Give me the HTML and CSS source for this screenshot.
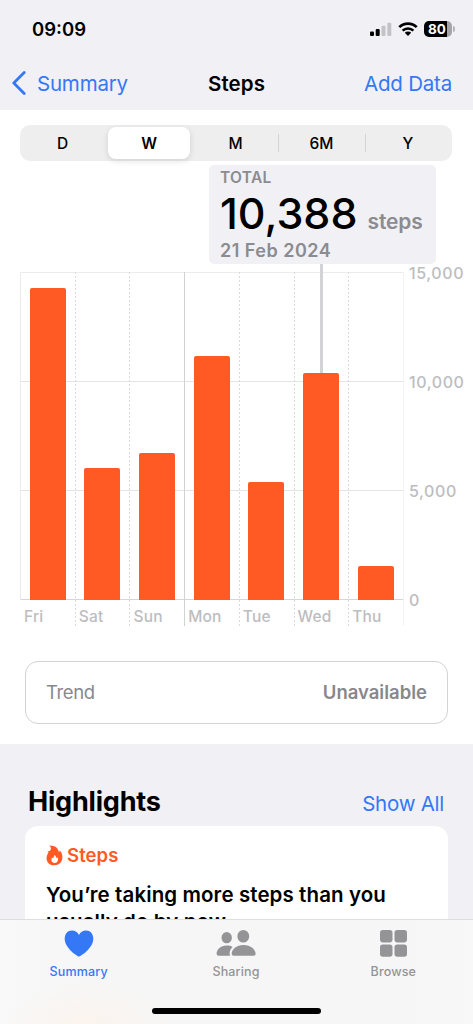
FILE: index.html
```html
<!DOCTYPE html>
<html lang="en">
<head>
  <meta charset="UTF-8"/>
  <meta name="viewport" content="width=device-width, initial-scale=1.0"/>
  <title>Steps</title>
  <link rel="stylesheet" href="styles.css">
</head>
<body>
  <div class="screen">
    <header class="header">
      <div class="status-bar">
        <span class="time">09:09</span>
        <div class="status-icons">
          <svg class="signal" viewBox="0 0 22 14" width="22" height="14">
            <rect x="0.5" y="9.5" width="4" height="4.5" rx="1.1"/>
            <rect x="6.2" y="7" width="4" height="7" rx="1.1"/>
            <rect class="off" x="12" y="3.8" width="4" height="10.2" rx="1.1"/>
            <rect class="off" x="17.8" y="0.8" width="4" height="13.2" rx="1.1"/>
          </svg>
          <svg class="wifi" viewBox="0 0 20 14" width="20" height="14">
            <path d="M1.3 5.1 A12.4 12.4 0 0 1 18.7 5.1" fill="none" stroke="#000" stroke-width="2.7"/>
            <path d="M4.6 8.6 A7.7 7.7 0 0 1 15.4 8.6" fill="none" stroke="#000" stroke-width="2.5"/>
            <path d="M10 14 L6.8 10.8 A4.6 4.6 0 0 1 13.2 10.8 Z"/>
          </svg>
          <div class="battery"><span class="battery-level">80</span></div>
        </div>
      </div>
      <nav class="nav-bar">
        <a class="nav-back">
          <svg viewBox="0 0 14 24" width="14" height="24">
            <path d="M12.2 1.6 L1.8 12 L12.2 22.4" fill="none" stroke="#3478f6" stroke-width="2.8" stroke-linecap="round" stroke-linejoin="round"/>
          </svg>
          <span>Summary</span>
        </a>
        <h1>Steps</h1>
        <a class="nav-action">Add Data</a>
      </nav>
    </header>

    <main class="content">
      <div class="segments">
        <button class="segment">D</button>
        <button class="segment active">W</button>
        <button class="segment">M</button>
        <button class="segment divided">6M</button>
        <button class="segment divided">Y</button>
      </div>

      <div class="chart">
        <div class="plot">
          <div class="day first"><div class="bar-area"><div class="bar" style="height: 95.2%"></div></div><span>Fri</span></div>
          <div class="day"><div class="bar-area"><div class="bar" style="height: 40.2%"></div></div><span>Sat</span></div>
          <div class="day"><div class="bar-area"><div class="bar" style="height: 44.8%"></div></div><span>Sun</span></div>
          <div class="day week-start"><div class="bar-area"><div class="bar" style="height: 74.5%"></div></div><span>Mon</span></div>
          <div class="day"><div class="bar-area"><div class="bar" style="height: 35.9%"></div></div><span>Tue</span></div>
          <div class="day"><div class="bar-area"><div class="bar" style="height: 69.2%"></div></div><span>Wed</span></div>
          <div class="day"><div class="bar-area"><div class="bar" style="height: 10.4%"></div></div><span>Thu</span></div>
        </div>
        <div class="y-axis">
          <span>15,000</span>
          <span>10,000</span>
          <span>5,000</span>
          <span>0</span>
        </div>
        <!-- Callout for the selected day -->
        <div class="marker"></div>
        <div class="callout">
          <div class="callout-label">TOTAL</div>
          <div class="callout-value"><strong>10,388</strong><span>steps</span></div>
          <div class="callout-date">21 Feb 2024</div>
        </div>
      </div>

      <div class="trend">
        <span class="trend-name">Trend</span>
        <span class="trend-value">Unavailable</span>
      </div>
    </main>

    <section class="highlights">
      <div class="highlights-head">
        <h2>Highlights</h2>
        <a class="show-all">Show All</a>
      </div>
      <div class="card">
        <div class="card-title">
          <svg viewBox="0 0 17 21" width="17" height="21">
            <path fill="#ff5a24" d="M3.2 0.6 C9 0.4 12.2 3.2 12.9 7.2 C13.4 6.8 13.7 6.1 13.8 5.2 C15.6 7.3 16.6 9.8 16.4 12.6 C16.2 17.4 13 20.3 8.4 20.3 C3.8 20.3 0.7 17.6 0.6 13.4 C0.5 11 1.4 9.3 2.5 7.5 L1.4 6.6 C2.9 6.3 4.3 5.7 4.8 4.5 C5.2 3.2 4.5 1.6 3.2 0.6 Z"/>
            <path fill="#fff" d="M8.2 9.9 C9.8 10.6 10.4 11.8 10.2 13.2 C10.7 13 11.1 12.5 11.2 12 C11.9 13 12.1 13.9 11.9 15 C11.6 16.9 10.4 17.9 8.7 17.9 C6.7 17.9 5.4 16.8 5.4 15 C5.4 14 5.7 13.3 6.2 12.6 C6.4 13.1 6.7 13.4 7.1 13.5 C7.1 12.2 8.7 11.3 8.2 9.9 Z"/>
          </svg>
          <span>Steps</span>
        </div>
        <p class="card-text">You’re taking more steps than you<br>usually do by now.</p>
      </div>
    </section>

    <footer class="tab-bar">
      <div class="tabs">
        <a class="tab active">
          <svg viewBox="0 0 30 27" width="30" height="27">
            <path d="M15 26.6 C13.7 26.6 0.7 18.3 0.7 8.8 C0.7 4.1 3.7 0.6 7.9 0.6 C11.2 0.6 13.6 2.2 15 4.9 C16.4 2.2 18.8 0.6 22.1 0.6 C26.3 0.6 29.3 4.1 29.3 8.8 C29.3 18.3 16.3 26.6 15 26.6 Z"/>
          </svg>
          <span>Summary</span>
        </a>
        <a class="tab">
          <svg viewBox="0 0 40 27" width="40" height="27">
            <ellipse cx="10.7" cy="7.7" rx="5.2" ry="5.6"/>
            <path d="M0.6 23.9 C0.6 19.6 4.7 15.6 10.6 15.6 C13.1 15.6 15 16.1 16.6 17 C14.6 18.9 13.6 21 13.6 23.7 Q13.6 24.9 14.3 25.7 H2.7 Q0.6 25.7 0.6 23.9 Z"/>
            <ellipse cx="27.3" cy="6.3" rx="5.9" ry="6.3"/>
            <path d="M15.6 23.9 C15.6 19.5 20.3 14.9 27.5 14.9 C34.8 14.9 39.6 19.5 39.6 23.9 Q39.6 25.7 37.4 25.7 H17.8 Q15.6 25.7 15.6 23.9 Z"/>
          </svg>
          <span>Sharing</span>
        </a>
        <a class="tab">
          <svg viewBox="0 0 27 27" width="27" height="27">
            <rect x="0" y="0" width="12.5" height="12.4" rx="2.8"/>
            <rect x="14.5" y="0" width="12.5" height="12.4" rx="2.8"/>
            <rect x="0" y="14.4" width="12.5" height="12.4" rx="2.8"/>
            <rect x="14.5" y="14.4" width="12.5" height="12.4" rx="2.8"/>
          </svg>
          <span>Browse</span>
        </a>
      </div>
      <div class="home-indicator"></div>
    </footer>
  </div>
</body>
</html>
```
FILE: styles.css
```css
:root {
  --bg-color: #f0f0f5;
  --blue: #3478f6;
  --orange: #ff5a24;
  --gray: #8b8b90;
  --light-gray: #bdbdbf;
  --line: #e4e4e6;
}

*, *::before, *::after { box-sizing: border-box; }

body {
  margin: 0;
  font-family: 'Inter', sans-serif;
  background: var(--bg-color);
  color: #000;
}

h1, h2, p { margin: 0; }

.screen {
  position: relative;
  display: flex;
  flex-direction: column;
  width: 473px;
  height: 1024px;
  overflow: hidden;
}

.header {
  height: 110px;
  flex: none;
  background: var(--bg-color);
}

.status-bar {
  display: flex;
  align-items: center;
  justify-content: space-between;
  height: 58px;
  padding: 0 18px 0 32px;
}

.time {
  font-size: 18.5px;
  font-weight: 600;
}

.status-icons {
  display: flex;
  align-items: center;
  gap: 6px;
}

.signal {
  width: 23px;
}

.signal .off { fill: #c3c3c7; }

.battery {
  position: relative;
  width: 28px;
  height: 16px;
  margin-right: 3px;
  border-radius: 5px;
  background: linear-gradient(90deg, #000 82%, #a5a5a9 82%);
}

.battery::after {
  content: "";
  position: absolute;
  left: 29px;
  top: 5px;
  width: 2px;
  height: 6px;
  border-radius: 0 2px 2px 0;
  background: #b5b5b9;
}

.battery-level {
  display: block;
  padding-right: 2px;
  color: #fff;
  font-size: 13.5px;
  font-weight: 700;
  line-height: 16px;
  text-align: center;
}

.nav-bar {
  display: grid;
  grid-template-columns: 1fr auto 1fr;
  align-items: center;
  height: 50px;
  padding: 0 21px 0 12px;
  color: var(--blue);
  font-size: 20.5px;
  letter-spacing: -0.2px;
}

.nav-back {
  display: flex;
  align-items: center;
  gap: 11px;
}

.nav-action {
  text-align: right;
}

.nav-bar h1 {
  padding-left: 9px;
  color: #000;
  font-size: 20.5px;
  font-weight: 600;
  letter-spacing: 0.1px;
}

.content {
  flex: none;
  height: 634px;
  padding: 15px 20px 0;
  background: #fff;
}

.segments {
  display: grid;
  grid-template-columns: repeat(5, 1fr);
  width: 432px;
  height: 36px;
  padding: 2px 0;
  border-radius: 10px;
  background: #eeeeef;
}

.segment {
  margin: 0 3px 0 2px;
  padding: 0;
  border: none;
  border-radius: 8px;
  background: none;
  color: #000;
  font: 500 15.5px 'Inter', sans-serif;
}

.segment.active {
  background: #fff;
  font-weight: 600;
  box-shadow: 0 2px 6px rgba(0,0,0,0.12);
}

.segment.divided {
  margin: 0 1px 0 -1px;
  background: linear-gradient(#d4d4d6, #d4d4d6) 0 50% / 1px 18px no-repeat;
}

.chart {
  position: relative;
  display: flex;
  height: 354px;
  margin-top: 111px;
}

.plot {
  display: grid;
  flex: none;
  grid-template-columns: repeat(7, 1fr);
  width: 384px;
  border-right: 1px solid #f3f3f4;
  background:
    linear-gradient(#ececee, #ececee) 0 0 / 100% 1px no-repeat,
    linear-gradient(var(--line), var(--line)) 0 109px / 100% 1px no-repeat,
    linear-gradient(var(--line), var(--line)) 0 218px / 100% 1px no-repeat,
    linear-gradient(#d6d6d8, #d6d6d8) 0 327px / 100% 1px no-repeat;
}

.day {
  background: repeating-linear-gradient(#dadadc 0 2px, transparent 2px 4px) 0 0 / 1px 100% no-repeat;
}

.day.first { background: linear-gradient(#ebebed, #ebebed) 0 0 / 1px 328px no-repeat; }
.day.week-start { background: linear-gradient(#d2d2d4, #d2d2d4) 0 0 / 1px 100% no-repeat; }

.bar-area {
  display: flex;
  align-items: flex-end;
  height: 328px;
  padding-left: 9.5px;
}

.bar {
  width: 36px;
  border-radius: 2px 2px 0 0;
  background: var(--orange);
}

.day span {
  display: block;
  height: 26px;
  padding-left: 4px;
  color: var(--light-gray);
  font-size: 15.5px;
  font-weight: 500;
  letter-spacing: 0.2px;
  line-height: 34px;
}

.y-axis {
  display: flex;
  flex-direction: column;
  justify-content: space-between;
  height: 347px;
  margin: -9px 0 0 5px;
  color: var(--light-gray);
  font-size: 16px;
  font-weight: 500;
  letter-spacing: 0.6px;
  line-height: 20px;
}

.marker {
  position: absolute;
  left: 300px;
  top: -8px;
  width: 2.5px;
  height: 109px;
  background: #d3d3d6;
}

.callout {
  position: absolute;
  left: 189px;
  top: -107px;
  width: 227px;
  height: 99px;
  padding: 3px 11px 0;
  border-radius: 5px;
  background: var(--bg-color);
  color: var(--gray);
  font-weight: 600;
  white-space: nowrap;
}

.callout-label {
  font-size: 15.5px;
  font-weight: 600;
  letter-spacing: 0.3px;
  line-height: 20px;
}

.callout-value {
  display: flex;
  align-items: baseline;
  gap: 10px;
  height: 52px;
  font-size: 21px;
  letter-spacing: -0.1px;
  line-height: 50px;
}

.callout-value strong {
  color: #000;
  font-size: 43px;
  font-weight: 500;
  letter-spacing: 0;
}

.callout-date {
  font-size: 18px;
  letter-spacing: 0.5px;
  line-height: 22px;
}

.trend {
  display: flex;
  align-items: center;
  justify-content: space-between;
  width: 423px;
  height: 63px;
  margin: 35px 0 0 5px;
  padding: 0 20px 2px;
  border: 1.5px solid #d3d3d5;
  border-radius: 13px;
  color: #88888b;
  font-size: 18.5px;
}

.trend-name { letter-spacing: -0.4px; }
.trend-value { font-weight: 600; }

.highlights {
  flex: 1;
  padding: 41px 25px 0;
  background: var(--bg-color);
}

.highlights-head {
  display: flex;
  align-items: baseline;
  justify-content: space-between;
  height: 41px;
  padding: 0 4px 0 3px;
}

.highlights h2 {
  font-size: 27px;
  font-weight: 700;
  letter-spacing: -0.2px;
  line-height: 34px;
}

.show-all {
  color: var(--blue);
  font-size: 20.5px;
  letter-spacing: -0.25px;
}

.card {
  height: 240px;
  padding: 18px 21px;
  border-radius: 13px;
  background: #fff;
}

.card-title {
  display: flex;
  align-items: center;
  gap: 4px;
  height: 22px;
  color: var(--orange);
  font-size: 18.5px;
  font-weight: 600;
  letter-spacing: 0.1px;
}

.card-text {
  margin-top: 15px;
  font-size: 20.5px;
  font-weight: 600;
  letter-spacing: 0.1px;
  line-height: 27px;
  white-space: nowrap;
}

.tab-bar {
  position: absolute;
  left: 0;
  right: 0;
  bottom: 0;
  height: 105px;
  border-top: 1px solid #dededf;
  background:
    radial-gradient(ellipse 90px 50px at 85px 112px, #fcf3ec, rgba(252,243,236,0)),
    linear-gradient(90deg, #f9f9fa 0, #f6f6f6 90px, #f6f6f6 400px, #f8f8f9);
}

.tabs {
  display: grid;
  grid-template-columns: repeat(3, 1fr);
  width: 472px;
  padding-top: 10px;
}

.tab {
  display: flex;
  flex-direction: column;
  align-items: center;
  gap: 5px;
  color: #949496;
  font-size: 12.5px;
  font-weight: 500;
  letter-spacing: 0.15px;
  line-height: 19px;
}

.tab svg { fill: #949496; }

.tab.active { color: var(--blue); }
.tab.active svg { fill: var(--blue); }

.home-indicator {
  width: 169px;
  height: 6px;
  margin: 27px auto 0;
  border-radius: 3px;
  background: #000;
}
```
